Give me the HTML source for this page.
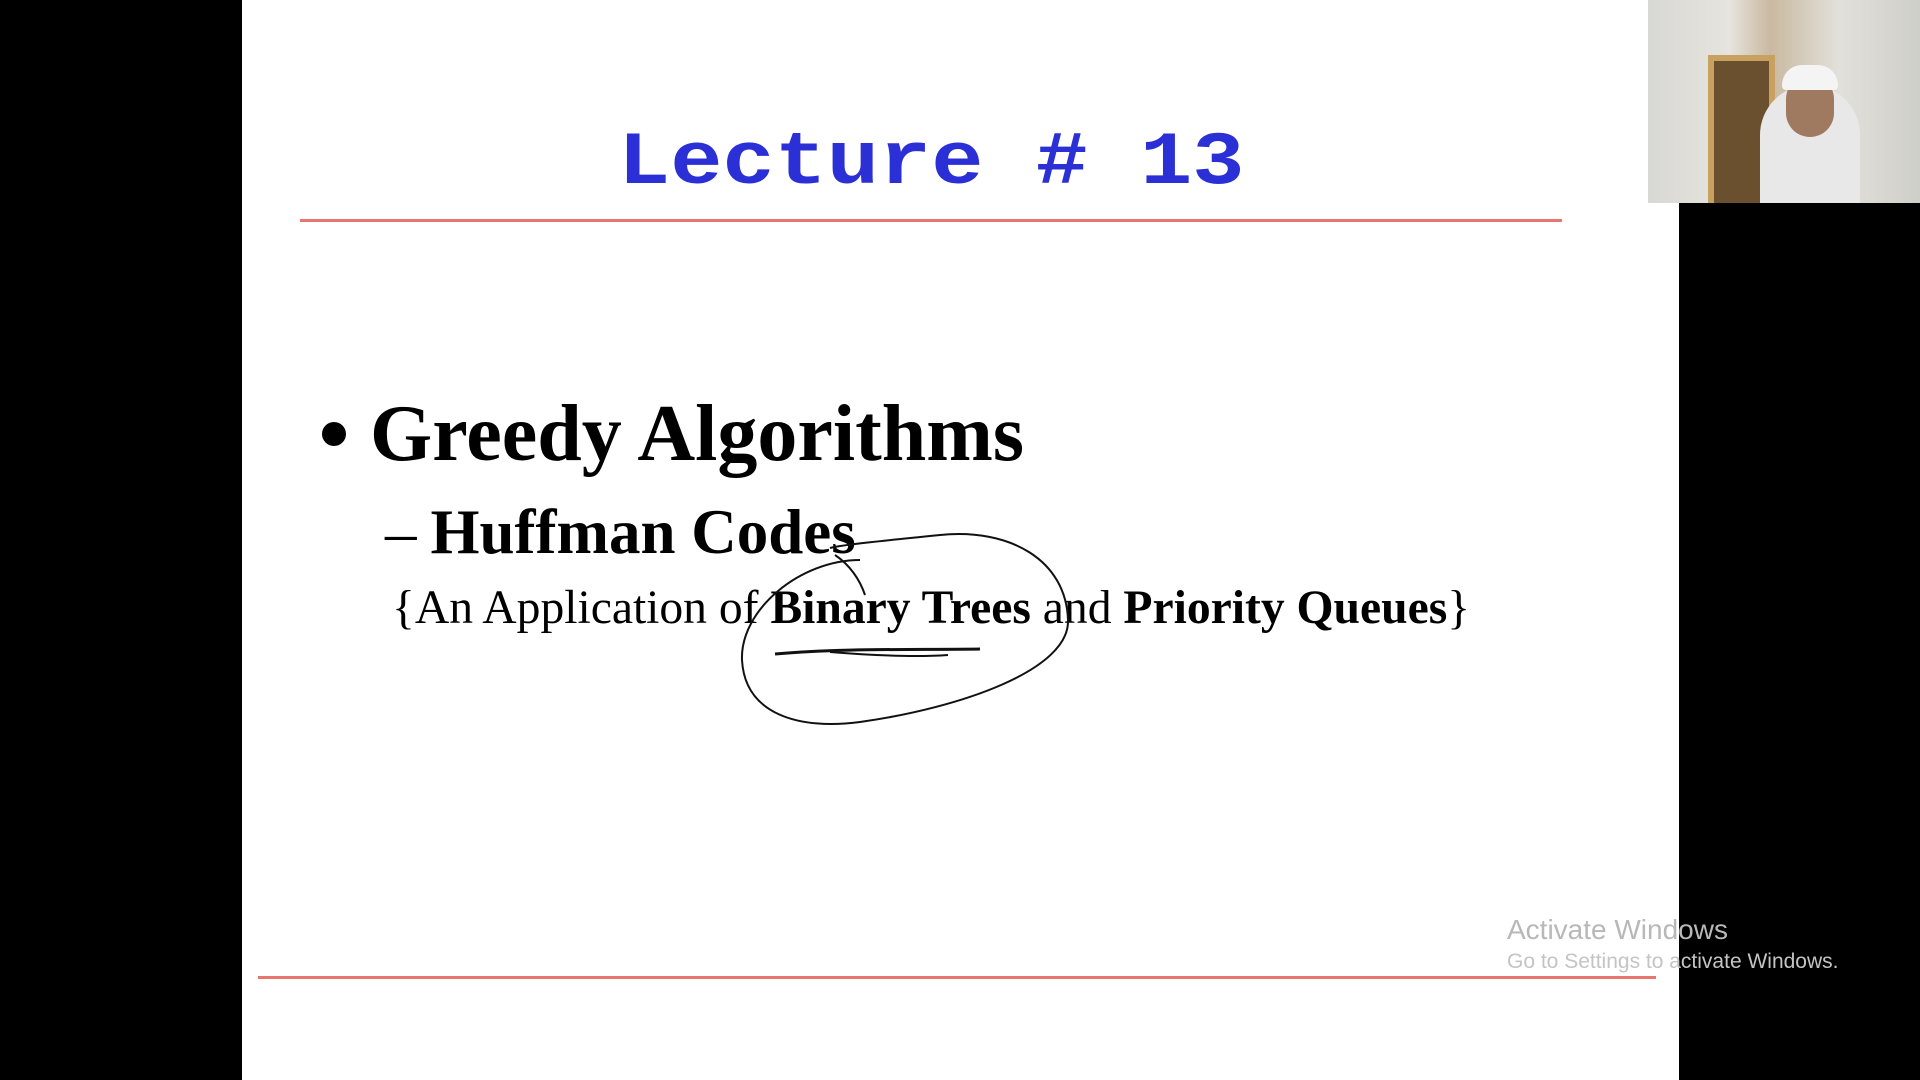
<!DOCTYPE html>
<html><head><meta charset="utf-8"><style>
html,body{margin:0;padding:0;width:1920px;height:1080px;overflow:hidden;background:#000;}
.slide{position:absolute;left:242px;top:0;width:1437px;height:1080px;background:#fff;}
.t{position:absolute;white-space:nowrap;}
</style></head><body>
<div class="slide"></div>
<div class="t" style="left:618px;top:110px;font-family:'Liberation Mono',monospace;font-weight:bold;font-size:87px;color:#2b2fd6;line-height:100px;transform:scaleY(0.86);transform-origin:0 78px;">Lecture # 13</div>
<div style="position:absolute;left:300px;top:219px;width:1262px;height:3px;background:#e8756f;"></div>
<div style="position:absolute;left:322px;top:422px;width:24px;height:24px;border-radius:50%;background:#000;"></div>
<div class="t" style="left:370px;top:384px;font-family:'Liberation Serif',serif;font-weight:bold;font-size:80px;line-height:100px;color:#000;">Greedy Algorithms</div>
<div class="t" style="left:385px;top:492px;font-family:'Liberation Serif',serif;font-size:63px;line-height:80px;color:#000;">–<b style="margin-left:14px">Huffman Codes</b></div>
<div class="t" style="left:392px;top:578px;font-family:'Liberation Serif',serif;font-size:47.6px;line-height:60px;color:#000;">{An Application of <b>Binary Trees</b> and <b>Priority Queues</b>}</div>
<svg style="position:absolute;left:0;top:0" width="1920" height="1080">
<path d="M860 560 C 800 560 740 610 742 660 C 745 715 800 730 860 722 C 960 708 1070 670 1068 620 C 1066 560 1010 528 940 535 C 890 540 840 545 830 548" fill="none" stroke="#111" stroke-width="2"/>
<path d="M835 555 C 850 565 860 580 865 595" fill="none" stroke="#111" stroke-width="2"/>
<path d="M775 654 C 840 648 920 650 980 649" fill="none" stroke="#111" stroke-width="3"/>
<path d="M830 652 C 880 656 920 657 948 655" fill="none" stroke="#111" stroke-width="2"/>
</svg>
<div style="position:absolute;left:258px;top:976px;width:1398px;height:3px;background:#e8756f;"></div>
<div class="t" style="left:1507px;top:914px;font-family:'Liberation Sans',sans-serif;font-size:28px;color:#b8b8b8;">Activate Windows</div>
<div class="t" style="left:1507px;top:950px;font-family:'Liberation Sans',sans-serif;font-size:21px;color:#c4c4c4;">Go to Settings to activate Windows.</div>
<div style="position:absolute;left:1648px;top:0;width:272px;height:203px;background:linear-gradient(90deg,#d8d8d4 0%,#e6e4de 30%,#c9b9a0 45%,#e2e0da 70%,#cfcfca 100%);overflow:hidden;">
<div style="position:absolute;left:60px;top:55px;width:55px;height:148px;background:#6b5030;border:6px solid #c8a060;"></div>
<div style="position:absolute;left:112px;top:85px;width:100px;height:130px;border-radius:50px 50px 10px 10px;background:#e8e8e8;"></div>
<div style="position:absolute;left:138px;top:75px;width:48px;height:62px;border-radius:24px;background:#a07a60;"></div>
<div style="position:absolute;left:134px;top:65px;width:56px;height:25px;border-radius:20px 20px 4px 4px;background:#f4f4f4;"></div>
</div>
</body></html>
